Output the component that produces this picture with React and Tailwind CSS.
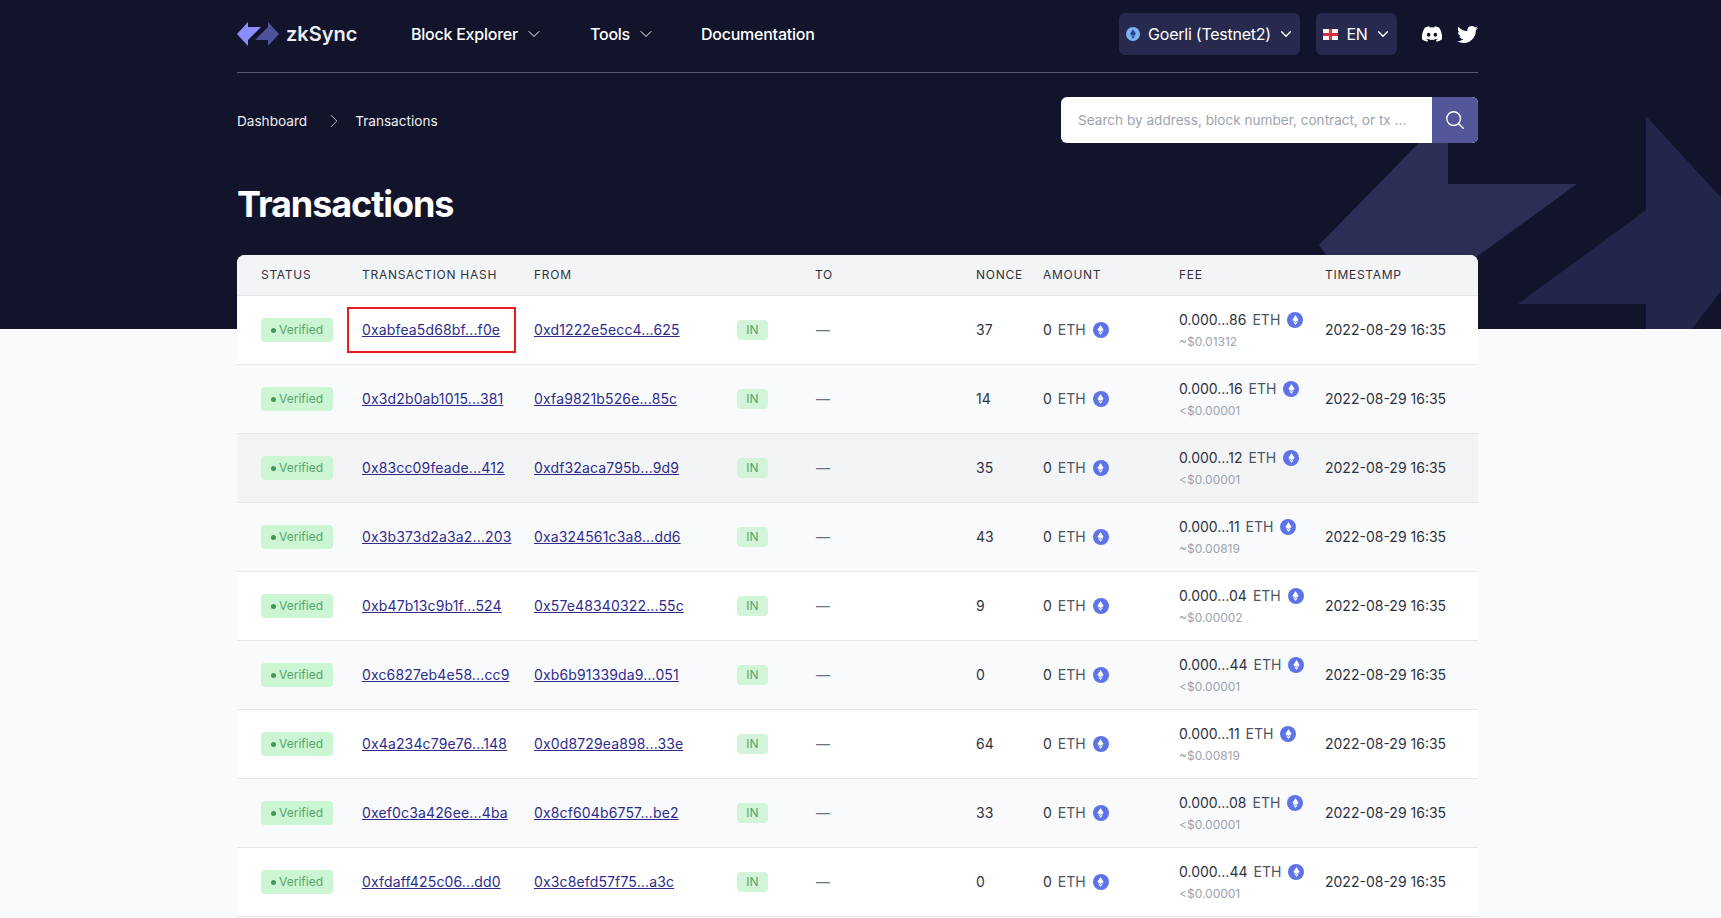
import React from 'react';
import { HiOutlineChevronDown, HiOutlineChevronRight, HiOutlineMagnifyingGlass } from 'react-icons/hi2';
import { FaDiscord, FaTwitter } from 'react-icons/fa';

const rows = [
  { hash: '0xabfea5d68bf...f0e', from: '0xd1222e5ecc4...625', nonce: '37', fee: '0.000...86', usd: '~$0.01312' },
  { hash: '0x3d2b0ab1015...381', from: '0xfa9821b526e...85c', nonce: '14', fee: '0.000...16', usd: '<$0.00001' },
  { hash: '0x83cc09feade...412', from: '0xdf32aca795b...9d9', nonce: '35', fee: '0.000...12', usd: '<$0.00001' },
  { hash: '0x3b373d2a3a2...203', from: '0xa324561c3a8...dd6', nonce: '43', fee: '0.000...11', usd: '~$0.00819' },
  { hash: '0xb47b13c9b1f...524', from: '0x57e48340322...55c', nonce: '9', fee: '0.000...04', usd: '~$0.00002' },
  { hash: '0xc6827eb4e58...cc9', from: '0xb6b91339da9...051', nonce: '0', fee: '0.000...44', usd: '<$0.00001' },
  { hash: '0x4a234c79e76...148', from: '0x0d8729ea898...33e', nonce: '64', fee: '0.000...11', usd: '~$0.00819' },
  { hash: '0xef0c3a426ee...4ba', from: '0x8cf604b6757...be2', nonce: '33', fee: '0.000...08', usd: '<$0.00001' },
  { hash: '0xfdaff425c06...dd0', from: '0x3c8efd57f75...a3c', nonce: '0', fee: '0.000...44', usd: '<$0.00001' },
];

const columns = 'grid grid-cols-[125px_172px_203px_78px_161px_67px_136px_146px_153px] items-center';

const EthIcon = () => (
  <span className="flex h-4 w-4 shrink-0 items-center justify-center rounded-full bg-[#5f73e8]">
    <svg viewBox="0 0 10 16" className="h-[10px] w-[7px]" fill="#fff">
      <path d="M5 0 10 8 5 11 0 8Z" />
      <path d="M5 12.2 9.4 9.6 5 16 .6 9.6Z" />
    </svg>
  </span>
);

const Logo = () => (
  <svg viewBox="0 0 42 24" className="h-6 w-[42px]">
    <path d="M42 12 31 24v-6H18L31 5V0Z" fill="#4e529a" />
    <path d="M0 12 11 0v5h13L11 18v6Z" fill="#8c8dfc" />
  </svg>
);

const Backdrop = () => (
  <svg className="absolute left-0 top-0 h-[329px] w-[1721px]" viewBox="0 0 1721 329">
    <path d="M1448 113V184H1577L1475 258 1400 329H1380L1319 245Z" fill="#2c2e56" />
    <path d="M1646 116 1760 240 1692 329H1646V304H1518L1646 210Z" fill="#23254a" />
  </svg>
);

const Table = () => (
  <div className="overflow-hidden rounded-t-lg bg-white text-sm text-[#2f3241]">
    <div className={`${columns} h-[41px] border-b border-[#e5e7eb] bg-[#f3f4f6] text-xs uppercase tracking-[0.06em] text-[#2f3241]`}>
      <div className="pl-6">Status</div>
      <div>Transaction Hash</div>
      <div>From</div>
      <div />
      <div>To</div>
      <div>Nonce</div>
      <div>Amount</div>
      <div>Fee</div>
      <div>Timestamp</div>
    </div>
    {rows.map((row, i) => (
      <div
        key={row.hash}
        className={`${columns} h-[69.05px] border-b border-[#e5e7eb] ${i === 2 ? 'bg-[#f3f4f6]' : i % 2 === 1 ? 'bg-[#f9fafc]' : 'bg-white'}`}
      >
        <div className="pl-6">
          <span className="flex h-6 w-[72px] items-center justify-center gap-[3px] rounded bg-[#ccf5d3] text-xs text-[#55a56c]">
            <span className="h-[5px] w-[5px] rounded-full bg-[#3f9a58]" />
            Verified
          </span>
        </div>
        <div className="relative">
          <a className="tracking-[0.01em] text-[#2e2d8c] underline">{row.hash}</a>
          {i === 0 && <span className="absolute left-[-15px] top-[-13px] h-[46px] w-[169px] border-2 border-[#e81c1c]" />}
        </div>
        <div>
          <a className="tracking-[0.01em] text-[#2e2d8c] underline">{row.from}</a>
        </div>
        <div>
          <span className="flex h-5 w-[31px] items-center justify-center rounded bg-[#d2f5d9] text-xs text-[#55a56c]">IN</span>
        </div>
        <div className="pl-px font-medium text-[#6b7280]">—</div>
        <div>{row.nonce}</div>
        <div className="flex items-center gap-[7px]">
          <span>0</span>
          <span className="-ml-px text-[#4b5563]">ETH</span>
          <EthIcon />
        </div>
        <div>
          <div className="flex items-center gap-[7px]">
            <span>{row.fee}</span>
            <span className="-ml-px text-[#4b5563]">ETH</span>
            <EthIcon />
          </div>
          <div className="mt-1 text-xs text-[#9ca3af]">{row.usd}</div>
        </div>
        <div className="whitespace-nowrap">2022-08-29 16:35</div>
      </div>
    ))}
  </div>
);

const App = () => {
  return (
    <div className="relative h-[918px] overflow-hidden bg-[#f9fafc] font-['Inter',sans-serif]">
      <div className="absolute inset-x-0 top-0 h-[329px] bg-[#11142b]" />
      <Backdrop />

      <div className="relative ml-[237px] w-[1241px]">
        {/* Nav */}
        <header className="flex h-[73px] items-center border-b border-[#55576c] pb-1 text-white">
          <div className="flex w-[174px] items-center gap-[7px]">
            <Logo />
            <span className="text-xl font-semibold text-[#ececf2]">zkSync</span>
          </div>
          <nav className="flex items-center text-base font-medium tracking-[-0.015em]">
            <span className="flex w-[179px] items-center gap-2">
              Block Explorer <HiOutlineChevronDown className="h-4 w-4" />
            </span>
            <span className="flex w-[111px] items-center gap-2">
              Tools <HiOutlineChevronDown className="h-4 w-4" />
            </span>
            <span>Documentation</span>
          </nav>
          <div className="ml-auto flex items-center tracking-[-0.015em]">
            <button className="flex h-[42px] w-[181px] items-center justify-center gap-2 rounded-md bg-[#27294f] text-base">
              <span className="flex h-[14px] w-[14px] items-center justify-center rounded-full bg-[#7fb2f0]">
                <svg viewBox="0 0 10 16" className="h-[10px] w-[6px]" fill="#27408f">
                  <path d="M5 0 10 8 5 11 0 8Z" />
                  <path d="M5 12.2 9.4 9.6 5 16 .6 9.6Z" />
                </svg>
              </span>
              Goerli (Testnet2)
              <HiOutlineChevronDown className="h-3.5 w-3.5 stroke-[2.5px]" />
            </button>
            <button className="ml-4 flex h-[42px] w-[81px] items-center justify-center gap-2 rounded-md bg-[#27294f] text-base">
              <svg viewBox="0 0 15 11" className="h-[11px] w-[15px]">
                <rect width="15" height="11" fill="#f4f4f6" />
                <rect x="6" width="3" height="11" fill="#d33244" />
                <rect y="4" width="15" height="3" fill="#d33244" />
              </svg>
              EN
              <HiOutlineChevronDown className="h-3.5 w-3.5 stroke-[2.5px]" />
            </button>
            <FaDiscord className="ml-6 h-[22px] w-[22px]" />
            <FaTwitter className="ml-[14px] h-[21px] w-[21px]" />
          </div>
        </header>

        {/* Breadcrumb + search */}
        <div className="mt-6 flex items-center justify-between">
          <div className="flex items-center pt-0.5 text-[13.6px] text-[#eeeef3]">
            <span>Dashboard</span>
            <HiOutlineChevronRight className="ml-[18px] mr-3 h-[18px] w-[18px] stroke-1" />
            <span>Transactions</span>
          </div>
          <div className="flex h-[46px] w-[417px] overflow-hidden rounded-md bg-white">
            <input
              readOnly
              placeholder="Search by address, block number, contract, or tx ..."
              className="min-w-0 flex-1 px-[17px] text-[13.6px] outline-none placeholder:text-[#9ca3af]"
            />
            <span className="flex w-[46px] items-center justify-center bg-[#54569a] text-white">
              <HiOutlineMagnifyingGlass className="h-[22px] w-[22px]" />
            </span>
          </div>
        </div>

        <h1 className="mb-[31px] mt-[41px] text-4xl font-bold leading-10 tracking-[-0.03em] text-white">Transactions</h1>

        <Table />
      </div>
    </div>
  );
};

export default App;
